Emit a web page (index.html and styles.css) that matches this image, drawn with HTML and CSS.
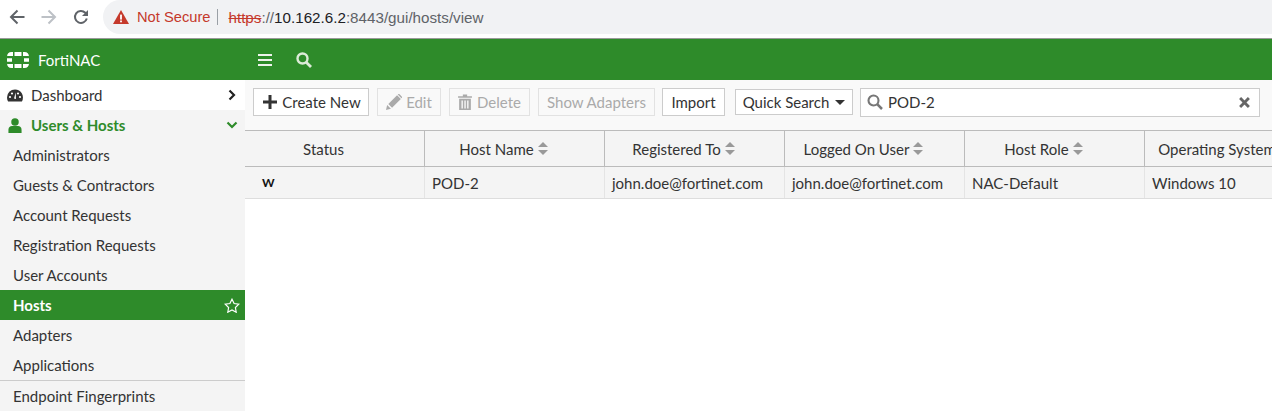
FILE: index.html
```html
<!DOCTYPE html>
<html>
<head>
  <title>FortiNAC</title>
  <link rel="stylesheet" href="styles.css">
</head>
<body>

  <!-- Browser bar -->
  <div class="browser-bar">
    <svg class="nav-icon" viewBox="0 0 16 16"><path d="M15.500 8H2.500M8.500 1.500L2 8l6.500 6.500" fill="none" stroke="#5f6368" stroke-width="2"/></svg>
    <svg class="nav-icon" viewBox="0 0 16 16"><path d="M.5 8h13M7.500 1.500L14 8l-6.500 6.500" fill="none" stroke="#bdc1c6" stroke-width="2"/></svg>
    <svg class="nav-icon" viewBox="0 0 16 16"><path d="M13.800 9.500A6 6 0 1 1 12.300 3.700L14 5.600" fill="none" stroke="#5f6368" stroke-width="2"/><path d="M15 1v6H9z" fill="#5f6368"/></svg>
    <div class="omnibox">
      <svg class="warn-icon" viewBox="0 0 16 14"><path d="M8 0l8 14H0z" fill="#c5392b"/><rect x="7.100" y="4.600" width="1.800" height="5" fill="#fff"/><rect x="7.100" y="10.500" width="1.800" height="1.800" fill="#fff"/></svg>
      <span class="not-secure">Not Secure</span>
      <span class="omni-sep"></span>
      <span class="url"><s class="scheme">https</s>://<b class="host">10.162.6.2</b>:8443/gui/hosts/view</span>
    </div>
  </div>

  <!-- App header -->
  <div class="app-header">
    <div class="brand">
      <svg class="logo" viewBox="0 0 22 16" fill="#fff">
        <path d="M7.500 0h7v4h-7zM7.500 12h7v4h-7zM0 6.200h5v3.600H0zM17 6.200h5v3.600h-5zM0 4.800C0 2 1.700 0 4.500 0H6v4H0zM16 0h1.500C20.300 0 22 2 22 4.800V4h-6zM0 11.200V12h6v4H4.500C1.700 16 0 14 0 11.200zM16 12h6v-.8C22 14 20.300 16 17.500 16H16z"/>
      </svg>
      <span>FortiNAC</span>
    </div>
    <svg class="hamburger" viewBox="0 0 14 12"><path d="M0 0h14v2H0zM0 5h14v2H0zM0 10h14v2H0z" fill="#eef3ec"/></svg>
    <svg class="header-search" viewBox="0 0 16 16"><circle cx="6.500" cy="6.500" r="5" fill="none" stroke="#dcebd8" stroke-width="2.400"/><path d="M10.200 10.200L15 15" stroke="#dcebd8" stroke-width="2.800"/></svg>
  </div>

  <div class="main">
    <!-- Sidebar -->
    <div class="sidebar">
      <div class="side-row side-top">
        <svg class="side-icon" viewBox="0 0 16 14"><path d="M8 1a8 8 0 0 0-8 8c0 1.500.4 2.900 1.100 4h13.800A8 8 0 0 0 8 1z" fill="#333"/><circle cx="3" cy="8.500" r="1.100" fill="#fff"/><circle cx="5" cy="5" r="1.100" fill="#fff"/><circle cx="13" cy="8.500" r="1.100" fill="#fff"/><circle cx="11" cy="5" r="1.100" fill="#fff"/><path d="M8.700 4l-1.700 6 2 .5z" fill="#fff"/></svg>
        <span class="side-label">Dashboard</span>
        <svg class="chevron" viewBox="0 0 8 12"><path d="M1.500 1.500L6 6l-4.500 4.500" fill="none" stroke="#222" stroke-width="2.200"/></svg>
      </div>
      <div class="side-row side-open">
        <svg class="side-icon" viewBox="0 0 14 16"><circle cx="7" cy="4.200" r="4" fill="#2e8b2a"/><path d="M0 16v-3.500C0 10 1.800 8.600 3.800 8.600h6.400c2 0 3.800 1.400 3.800 3.900V16z" fill="#2e8b2a"/></svg>
        <span class="side-label">Users &amp; Hosts</span>
        <svg class="chevron chevron-down" viewBox="0 0 12 8"><path d="M1.500 1.500L6 6l4.500-4.500" fill="none" stroke="#2e8b2a" stroke-width="2.200"/></svg>
      </div>
      <div class="side-item">Administrators</div>
      <div class="side-item">Guests &amp; Contractors</div>
      <div class="side-item">Account Requests</div>
      <div class="side-item">Registration Requests</div>
      <div class="side-item">User Accounts</div>
      <div class="side-item active">
        Hosts
        <svg class="star" viewBox="0 0 16 15"><path d="M8 1.200l2.100 4.300 4.700.7-3.400 3.300.8 4.700L8 11.900l-4.200 2.300.8-4.700L1.200 6.200l4.700-.7z" fill="none" stroke="#fff" stroke-width="1.200"/></svg>
      </div>
      <div class="side-item">Adapters</div>
      <div class="side-item">Applications</div>
      <div class="side-item side-split">Endpoint Fingerprints</div>
    </div>

    <!-- Content -->
    <div class="content">
      <div class="toolbar">
        <button class="btn btn-create">
          <svg class="plus" viewBox="0 0 14 14"><path d="M5.500 0h3v5.500H14v3H8.500V14h-3V8.500H0v-3h5.500z" fill="#333"/></svg>
          Create New
        </button>
        <button class="btn btn-edit off">
          <svg class="btn-icon edit-icon" viewBox="0 0 14 14"><path d="M0 14l1-4.300 3.300 3.300zM2 8.700L9.700 1l3.300 3.300-7.700 7.700zM10.500.3a1 1 0 0 1 1.400 0l1.800 1.800a1 1 0 0 1 0 1.400l-.2.200L10.300.5z" fill="#aaa"/></svg>
          Edit
        </button>
        <button class="btn btn-delete off">
          <svg class="btn-icon trash-icon" viewBox="0 0 13 15"><path d="M0 2h4.500V.5h4V2H13v1.600H0zM1 4.500h11V15H1zM3.200 6v7.500h1.300V6zM5.900 6v7.500h1.300V6zM8.500 6v7.500h1.300V6z" fill="#aaa" fill-rule="evenodd"/></svg>
          Delete
        </button>
        <button class="btn btn-adapters off">Show Adapters</button>
        <button class="btn btn-import">Import</button>
        <button class="btn btn-quick">Quick Search <span class="caret"></span></button>
        <div class="search-box">
          <svg class="search-icon" viewBox="0 0 16 16"><circle cx="6.500" cy="6.500" r="5" fill="none" stroke="#777" stroke-width="2.100"/><path d="M10.200 10.200L15 15" stroke="#777" stroke-width="2.500"/></svg>
          <span class="search-text">POD-2</span>
          <svg class="clear-icon" viewBox="0 0 10 10"><path d="M1 1l8 8M9 1l-8 8" stroke="#666" stroke-width="2.600"/></svg>
        </div>
      </div>

      <div class="grid">
        <div class="grid-row grid-head">
          <div class="cell">Status</div>
          <div class="cell">Host Name <span class="sort"></span></div>
          <div class="cell">Registered To <span class="sort"></span></div>
          <div class="cell">Logged On User <span class="sort"></span></div>
          <div class="cell">Host Role <span class="sort"></span></div>
          <div class="cell cell-last">Operating System <span class="sort"></span></div>
        </div>
        <div class="grid-row grid-body">
          <div class="cell status-cell">W</div>
          <div class="cell">POD-2</div>
          <div class="cell">john.doe@fortinet.com</div>
          <div class="cell">john.doe@fortinet.com</div>
          <div class="cell">NAC-Default</div>
          <div class="cell cell-last">Windows 10</div>
        </div>
      </div>
    </div>
  </div>

</body>
</html>
```

FILE: styles.css
```css
html, body {
  margin: 0;
  padding: 0;
  height: 411px;
  overflow: hidden;
}
body {
  font-family: Lato, "Noto Sans", sans-serif;
  font-size: 15px;
  color: #333;
  background-color: white;
}

/* Browser bar */
.browser-bar {
  display: flex;
  align-items: center;
  height: 38px;
  padding-left: 9px;
  border-bottom: 1px solid #999;
}
.nav-icon {
  width: 16px;
  height: 16px;
  margin-right: 16px;
  margin-top: -4px;
}
.omnibox {
  display: flex;
  flex: 1;
  align-items: center;
  height: 34px;
  margin-top: -4px;
  margin-left: -2px;
  padding-left: 10px;
  background: #f1f2f4;
  border-radius: 17px 0 0 17px;
  font-family: "Liberation Sans", Arial, sans-serif;
}
.warn-icon {
  width: 16px;
  height: 14px;
  margin-right: 8px;
}
.not-secure {
  color: #c5392b;
  font-size: 14.700px;
}
.omni-sep {
  width: 1px;
  height: 16px;
  background: #9aa0a6;
  margin: 0 10px 0 7px;
}
.url {
  color: #5f6368;
  font-size: 15.200px;
}
.scheme {
  color: #c5392b;
}
.host {
  color: #202124;
  font-weight: normal;
}

/* App header */
.app-header {
  display: flex;
  align-items: center;
  height: 41px;
  background: #2e8b2a;
  color: white;
}
.brand {
  display: flex;
  align-items: center;
  width: 245px;
  padding-left: 7px;
  box-sizing: border-box;
}
.logo {
  width: 22px;
  height: 16px;
  margin-right: 9px;
}
.hamburger {
  width: 14px;
  height: 12px;
  margin-left: 13px;
}
.header-search {
  width: 16px;
  height: 16px;
  margin-left: 24px;
}

.main {
  display: flex;
  height: 331px;
}

/* Sidebar */
.sidebar {
  width: 245px;
  flex-shrink: 0;
  background: #f4f4f4;
}
.side-row {
  display: flex;
  align-items: center;
  height: 30px;
  padding: 0 8px 0 7px;
}
.side-top {
  background: white;
}
.side-icon {
  width: 16px;
  height: 15px;
  margin-right: 8px;
}
.side-label {
  flex: 1;
}
.side-open {
  color: #2e8b2a;
  font-weight: bold;
}
.chevron {
  width: 8px;
  height: 12px;
  margin-right: 1px;
}
.chevron-down {
  width: 12px;
  height: 8px;
  margin-right: -1px;
}
.side-item {
  display: flex;
  align-items: center;
  justify-content: space-between;
  height: 30px;
  padding: 0 5px 0 13px;
}
.side-item.active {
  background: #2e8b2a;
  color: white;
  font-weight: bold;
}
.star {
  width: 16px;
  height: 15px;
}
.side-split {
  border-top: 1px solid #ccc;
}

/* Content */
.content {
  flex: 1;
  min-width: 0;
  background: white;
}
.toolbar {
  display: flex;
  align-items: center;
  height: 51px;
  padding: 0 0 6px 8px;
  box-sizing: border-box;
  background: #f9f9f9;
  border-bottom: 1px solid #bbb;
}
button {
  font-family: inherit;
}
.btn {
  display: flex;
  align-items: center;
  justify-content: center;
  height: 28px;
  padding: 0;
  margin-right: 8px;
  background: white;
  border: 1px solid #ccc;
  color: #333;
  font-size: 15px;
}
.btn.off {
  background: #f9f9f9;
  border-color: #e2e2e2;
  color: #aaa;
}
.btn-create { width: 116px; padding-left: 2px; }
.btn-edit { width: 64px; }
.btn-delete { width: 81px; }
.btn-adapters { width: 117px; margin-right: 7px; }
.btn-import { width: 63px; margin-right: 10px; }
.btn-quick { width: 118px; height: 26px; margin-right: 7px; }
.plus {
  width: 14px;
  height: 14px;
  margin-right: 5px;
}
.btn-icon {
  margin-right: 5px;
}
.edit-icon {
  width: 16px;
  height: 16px;
  margin-right: 4px;
}
.trash-icon {
  width: 14px;
  height: 16px;
}
.caret {
  display: inline-block;
  margin-left: 6px;
  border-top: 5px solid #333;
  border-left: 5px solid transparent;
  border-right: 5px solid transparent;
}
.search-box {
  display: flex;
  align-items: center;
  width: 400px;
  height: 29px;
  padding: 0 8px 0 6px;
  box-sizing: border-box;
  background: white;
  border: 1px solid #ccc;
}
.search-icon {
  width: 16px;
  height: 16px;
  margin-right: 5px;
}
.search-text {
  flex: 1;
}
.clear-icon {
  width: 11px;
  height: 11px;
  margin-right: 1px;
}

/* Grid */
.grid {
  overflow: hidden;
}
.grid-row {
  display: flex;
}
.cell {
  flex: 0 0 180px;
  box-sizing: border-box;
  border-right: 1px solid #ccc;
}
.cell-last {
  border-right: none;
}
.grid-head {
  height: 35px;
  background: #f4f4f4;
  border-bottom: 1px solid #bbb;
}
.grid-head .cell {
  display: flex;
  align-items: center;
  justify-content: center;
  padding-right: 22px;
  white-space: nowrap;
  border-right-color: #bbb;
}
.grid-body {
  height: 31px;
  background: #f4f4f4;
  border-bottom: 1px solid #ddd;
}
.grid-body .cell {
  display: flex;
  align-items: center;
  padding-left: 7px;
  border-right-color: #e4e4e4;
}
.status-cell {
  font-size: 12px;
  font-weight: bold;
  color: #111;
  padding-left: 17px !important;
}
.sort {
  display: inline-block;
  position: relative;
  flex-shrink: 0;
  width: 10px;
  height: 13px;
  margin-left: 4px;
}
.sort::before,
.sort::after {
  content: "";
  position: absolute;
  left: 0;
  border-left: 5px solid transparent;
  border-right: 5px solid transparent;
}
.sort::before {
  top: 0;
  border-bottom: 5.500px solid #999;
}
.sort::after {
  bottom: 0;
  border-top: 5.500px solid #999;
}
```
